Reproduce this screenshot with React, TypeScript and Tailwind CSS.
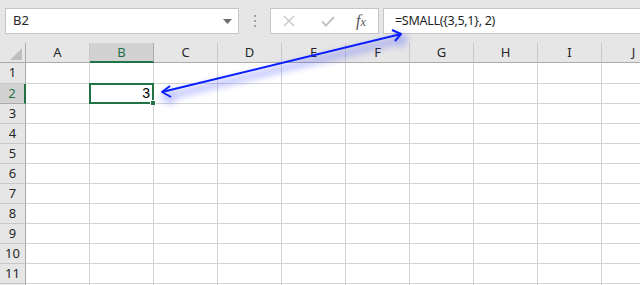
import React from 'react'

const COLS = ['A', 'B', 'C', 'D', 'E', 'F', 'G', 'H', 'I', 'J']
const ROWS = [1, 2, 3, 4, 5, 6, 7, 8, 9, 10, 11, 12]

const UI_FONT = { fontFamily: '"Noto Sans", "Open Sans", sans-serif' }

function Toolbar() {
  return (
    <div className="flex h-[43px] items-start bg-[#e6e6e6] pt-[8px]" style={UI_FONT}>
      <div className="ml-[5px] flex h-[26px] w-[234px] items-center justify-between border border-[#c6c6c6] bg-white pl-[7px] pr-[6px]">
        <span className="text-[13px] text-[#262626]">B2</span>
        <svg width="9" height="5" viewBox="0 0 9 5">
          <path d="M0 0 L9 0 L4.5 5 Z" fill="#6e6e6e" />
        </svg>
      </div>
      <div className="ml-[14px] flex h-[26px] w-[4px] flex-col items-center justify-center gap-[3px]">
        <span className="h-[2px] w-[2px] bg-[#a0a0a0]" />
        <span className="h-[2px] w-[2px] bg-[#a0a0a0]" />
        <span className="h-[2px] w-[2px] bg-[#a0a0a0]" />
      </div>
      <div className="ml-[13px] flex h-[26px] w-[109px] items-center border border-[#c6c6c6] bg-white">
        <svg className="ml-[12px]" width="12" height="12" viewBox="0 0 12 12">
          <path d="M1 1 L11 11 M11 1 L1 11" stroke="#c4c4c4" strokeWidth="1.3" />
        </svg>
        <svg className="ml-[26px]" width="14" height="11" viewBox="0 0 14 11">
          <path d="M1 5.5 L5 9.5 L13 1" stroke="#c4c4c4" strokeWidth="2" fill="none" />
        </svg>
        <span
          className="ml-[21px] text-[16px] leading-none italic text-[#555555]"
          style={{ fontFamily: '"Liberation Serif", serif' }}
        >
          f<span className="text-[12px]">x</span>
        </span>
      </div>
      <div className="ml-[4px] flex h-[26px] flex-1 items-center border border-r-0 border-[#c6c6c6] bg-white pl-[11px]">
        <span className="text-[12.5px] tracking-[-0.3px] text-[#1f1f1f]">=SMALL({'{'}3,5,1{'}'}, 2)</span>
      </div>
    </div>
  )
}

function Grid() {
  return (
    <div className="grid grid-cols-[26px_repeat(10,64px)] grid-rows-[20px_21px_repeat(11,20px)] bg-white">
      <div className="relative border-r border-b border-[#ababab] bg-[#e6e6e6]">
        <svg className="absolute left-[10px] top-[5px]" width="12" height="12" viewBox="0 0 12 12">
          <path d="M12 0 L12 12 L0 12 Z" fill="#bfbfbf" />
        </svg>
      </div>
      {COLS.map((c) =>
        c === 'B' ? (
          <div
            key={c}
            className="flex items-center justify-center border-r border-b-2 border-r-[#ababab] border-b-[#217346] bg-[#d2d2d2] pt-[1px] text-[13px] text-[#217346]"
            style={UI_FONT}
          >
            {c}
          </div>
        ) : (
          <div
            key={c}
            className="flex items-center justify-center border-r border-b border-r-[#c8c8c8] border-b-[#ababab] bg-[#e6e6e6] text-[13px] text-[#262626]"
            style={UI_FONT}
          >
            {c}
          </div>
        )
      )}
      {ROWS.map((r) => (
        <React.Fragment key={r}>
          {r === 2 ? (
            <div
              className="flex items-center justify-center border-r-2 border-b border-r-[#217346] border-b-[#ababab] bg-[#d2d2d2] text-[13px] text-[#217346]"
              style={UI_FONT}
            >
              {r}
            </div>
          ) : (
            <div
              className="flex items-center justify-center border-r border-b border-r-[#ababab] border-b-[#c8c8c8] bg-[#e6e6e6] text-[13px] text-[#262626]"
              style={UI_FONT}
            >
              {r < 12 ? r : ''}
            </div>
          )}
          {COLS.map((c) =>
            r === 2 && c === 'B' ? (
              <div
                key={c}
                className="relative -ml-[1px] -mt-[1px] flex items-end justify-end border-2 border-[#217346] pr-[2px] pb-[1px] text-[14px] leading-[16px] text-black"
                style={{ fontFamily: '"Liberation Sans", Arial, sans-serif' }}
              >
                3
                <span className="absolute -bottom-[4px] -right-[4px] h-[6px] w-[6px] border border-white bg-[#217346]" />
              </div>
            ) : (
              <div key={c} className="border-r border-b border-[#d4d4d4]" />
            )
          )}
        </React.Fragment>
      ))}
    </div>
  )
}

function Arrow() {
  return (
    <svg className="pointer-events-none absolute left-0 top-0" width="640" height="285" viewBox="0 0 640 285">
      <defs>
        <filter id="glow" x="-20%" y="-50%" width="140%" height="200%">
          <feGaussianBlur stdDeviation="3.5" />
        </filter>
      </defs>
      <g filter="url(#glow)" opacity="0.3" transform="translate(3 5)">
        <path d="M162 92 L401 34" stroke="#3040ff" strokeWidth="7" fill="none" />
        <path d="M170 86 L162 92 L171 97" stroke="#3040ff" strokeWidth="7" fill="none" />
        <path d="M392 30 L401 34 L395 41" stroke="#3040ff" strokeWidth="7" fill="none" />
      </g>
      <path d="M162 92 L401 34" stroke="#0a1eff" strokeWidth="2" fill="none" />
      <path d="M170 86 L162 92 L171 97" stroke="#0a1eff" strokeWidth="2" fill="none" strokeLinejoin="round" />
      <path d="M392 30 L401 34 L395 41" stroke="#0a1eff" strokeWidth="2" fill="none" strokeLinejoin="round" />
    </svg>
  )
}

export default function App() {
  return (
    <div className="relative h-[285px] w-[640px] overflow-hidden bg-white">
      <Toolbar />
      <Grid />
      <Arrow />
    </div>
  )
}
